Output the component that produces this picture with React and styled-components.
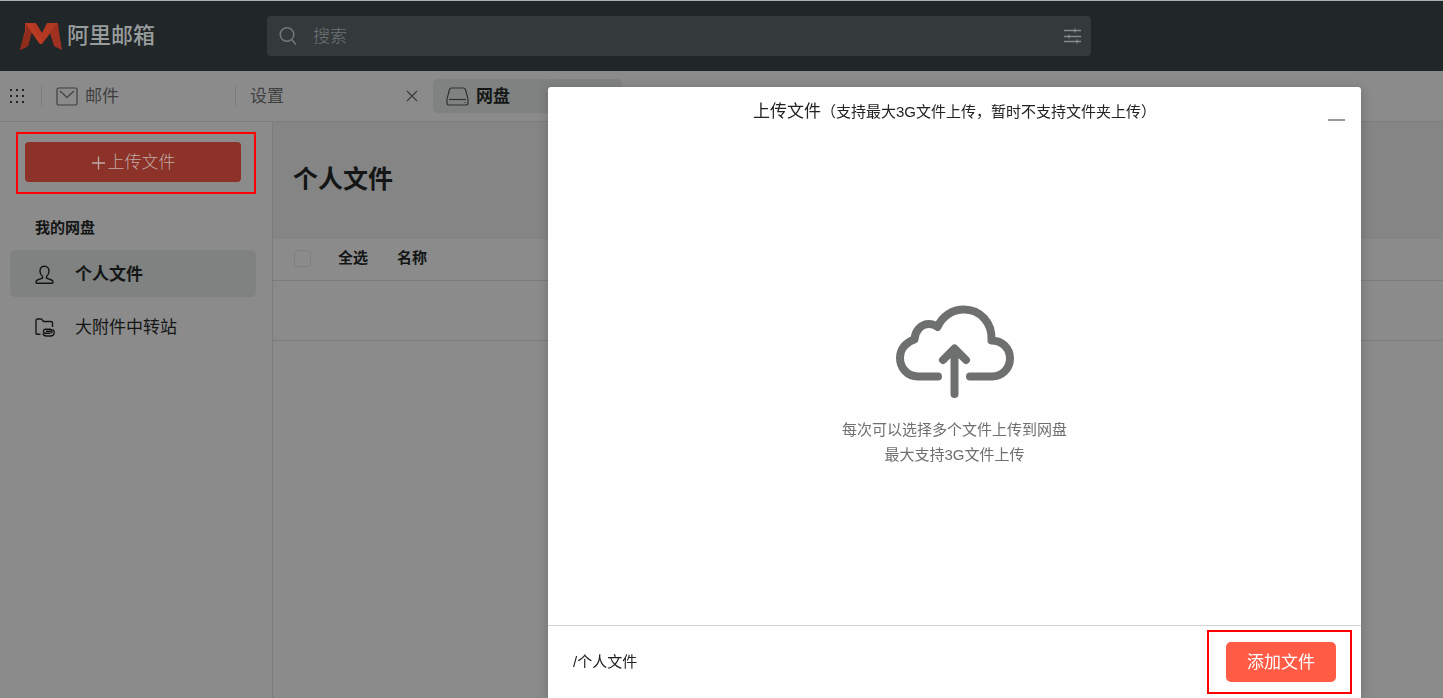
import React from 'react';
import styled, { createGlobalStyle } from 'styled-components';

const variables = {
  font: '"Liberation Sans", "Noto Sans CJK SC", sans-serif',
  fontSizes: {
    small: '15px',
    base: '17px',
    logo: '22px',
    title: '25px',
  },
  colors: {
    page: '#8b8b8b',
    header: '#212628',
    line: '#7c7c7c',
    text: '#141616',
    muted: '#3f3f3f',
    active: '#7f8281',
    primary: '#ff5b45',
    primaryDim: '#8d3228',
    mark: '#ff0000',
  },
};

const GlobalStyle = createGlobalStyle`
  * {
    box-sizing: border-box;
  }

  body {
    margin: 0;
    background: ${variables.colors.page};
    color: ${variables.colors.text};
    font-family: ${variables.font};
    font-size: ${variables.fontSizes.base};
    line-height: 24px;
  }

  button,
  input {
    font: inherit;
    color: inherit;
  }
`;

const Page = styled.div`
  display: flex;
  flex-direction: column;
  height: 100vh;
  overflow: hidden;
`;

const Header = styled.header`
  display: flex;
  align-items: center;
  height: 71px;
  flex-shrink: 0;
  border-top: 1px solid #a7b5b0;
  background: ${variables.colors.header};
`;

const Logo = styled.a`
  display: flex;
  align-items: center;
  gap: 4px;
  flex: 0 0 267px;
  padding-left: 20px;
  color: #989c9d;
  font-size: ${variables.fontSizes.logo};
  font-weight: 500;
  text-decoration: none;
`;

const SearchBox = styled.label`
  display: flex;
  align-items: center;
  gap: 15px;
  flex: 0 1 824px;
  height: 40px;
  padding: 0 9px 0 12px;
  border-radius: 4px;
  background: #34393b;
  color: #75797a;
`;

const SearchInput = styled.input`
  flex: 1;
  min-width: 0;
  padding: 2px 0 0;
  border: 0;
  outline: 0;
  background: transparent;
  font-weight: 300;

  &::placeholder {
    color: #6f7475;
    opacity: 1;
  }
`;

const IconButton = styled.button`
  display: flex;
  align-items: center;
  justify-content: center;
  padding: 0;
  border: 0;
  background: transparent;
`;

const Tabs = styled.nav`
  display: flex;
  align-items: center;
  height: 51px;
  flex-shrink: 0;
  border-bottom: 1px solid ${variables.colors.line};
`;

const AppsButton = styled(IconButton)`
  width: 41px;
  height: 34px;
  padding-right: 7px;
`;

const Tab = styled.div`
  display: flex;
  align-items: center;
  justify-content: space-between;
  width: ${({ $width }) => $width};
  height: ${({ $active }) => ($active ? '34px' : '20px')};
  padding: 0 15px 0 ${({ $active }) => ($active ? '13px' : '14px')};
  border-left: ${({ $active }) => ($active ? '0' : `1px solid ${variables.colors.line}`)};
  border-radius: ${({ $active }) => ($active ? '5px' : '0')};
  background: ${({ $active }) => ($active ? variables.colors.active : 'transparent')};
  color: ${({ $active }) => ($active ? variables.colors.text : variables.colors.muted)};
  font-weight: ${({ $active }) => ($active ? 700 : 400)};
`;

const TabLink = styled.a`
  display: flex;
  align-items: center;
  gap: 7px;
  color: inherit;
  text-decoration: none;
`;

const TabText = styled.span`
  padding-top: 2px;
`;

const Body = styled.div`
  display: flex;
  flex: 1;
  min-height: 0;
`;

const Sidebar = styled.aside`
  flex: 0 0 273px;
  padding: 10px 16px 0 10px;
  border-right: 1px solid ${variables.colors.line};
`;

const Mark = styled.div`
  display: flex;
  border: 2px solid ${variables.colors.mark};
`;

const UploadMark = styled(Mark)`
  margin-left: 6px;
  padding: 8px 13px 10px 7px;
`;

const UploadButton = styled.button`
  display: flex;
  align-items: center;
  justify-content: center;
  gap: 2px;
  width: 100%;
  height: 40px;
  padding: 2px 0 0;
  border: 0;
  border-radius: 4px;
  background: ${variables.colors.primaryDim};
  color: #c0aaa6;
  font-weight: 300;
`;

const SideTitle = styled.h2`
  margin: 22px 0 10px 25px;
  font-size: ${variables.fontSizes.small};
  font-weight: 700;
`;

const SideItem = styled.a`
  display: flex;
  align-items: center;
  gap: 20px;
  height: 47px;
  margin-bottom: 6px;
  padding: 2px 0 0 25px;
  border-radius: 5px;
  background: ${({ $active }) => ($active ? variables.colors.active : 'transparent')};
  color: ${variables.colors.text};
  font-weight: ${({ $active }) => ($active ? 700 : 400)};
  text-decoration: none;
`;

const Main = styled.main`
  flex: 1;
  min-width: 0;
`;

const MainHead = styled.div`
  height: 117px;
  padding: 39px 20px;
  background: #858585;
`;

const MainTitle = styled.h1`
  margin: 0;
  font-size: ${variables.fontSizes.title};
  font-weight: 700;
  line-height: 36px;
`;

const FileTable = styled.table`
  width: 100%;
  border-collapse: collapse;
  table-layout: fixed;
  font-size: ${variables.fontSizes.small};
`;

const HeadCell = styled.th`
  width: ${({ $width }) => $width || 'auto'};
  height: 41px;
  padding: 0 0 2px ${({ $indent }) => $indent || '0'};
  border-bottom: 1px solid ${variables.colors.line};
  font-weight: 700;
  text-align: left;
`;

const EmptyCell = styled.td`
  height: 60px;
  padding: 0;
  border-bottom: 1px solid ${variables.colors.line};
`;

const CheckBox = styled.input`
  display: block;
  appearance: none;
  width: 17px;
  height: 17px;
  margin: 0;
  border: 1px solid #7f8080;
  border-radius: 3px;
`;

const Overlay = styled.div`
  position: fixed;
  inset: 0;
  display: flex;
  justify-content: flex-end;
  padding: 87px 82px 0 0;
`;

const Dialog = styled.section`
  display: flex;
  flex-direction: column;
  width: 813px;
  border-radius: 3px 3px 0 0;
  background: #fefefe;
  box-shadow: 0 2px 12px rgba(0, 0, 0, 0.2);
`;

const DialogHead = styled.header`
  display: grid;
  grid-template-columns: 1fr auto 1fr;
  align-items: start;
  height: 50px;
  padding: 13px 16px 0;
`;

const DialogTitle = styled.h2`
  grid-column: 2;
  margin: 0;
  color: #222;
  font-size: ${variables.fontSizes.base};
  font-weight: 400;
`;

const TitleNote = styled.span`
  font-size: ${variables.fontSizes.small};
`;

const MinimizeButton = styled(IconButton)`
  justify-self: end;
  height: 40px;
  color: #777;
`;

const DropZone = styled.div`
  display: flex;
  flex-direction: column;
  align-items: center;
  flex: 1;
  padding-top: 168px;
  color: #6e706f;
`;

const Hint = styled.p`
  margin: 18px 0 0;
  font-size: ${variables.fontSizes.small};
  line-height: 25px;
  text-align: center;
`;

const DialogFoot = styled.footer`
  display: flex;
  align-items: center;
  justify-content: space-between;
  height: 73px;
  padding: 0 9px 0 25px;
  border-top: 1px solid #d2d4d3;
`;

const PathText = styled.span`
  color: #222;
  font-size: ${variables.fontSizes.small};
`;

const AddMark = styled(Mark)`
  padding: 10px 14px 10px 17px;
`;

const AddButton = styled.button`
  width: 110px;
  height: 40px;
  padding: 2px 0 0;
  border: 0;
  border-radius: 5px;
  background: ${variables.colors.primary};
  color: #fff;
`;

function LogoIcon() {
  return (
    <svg width="43" height="29" viewBox="0 0 43 29" aria-hidden="true">
      <path d="M5 1h11l6 10 5-10h11L22 22h-2L12 9 8 24 0 28 5 9Z" fill="#b23822" />
      <path d="M5 1 12 9 8 24 0 28 6 8Z" fill="#8f2c1c" />
      <path d="M5 1h6l12 19-2 2-2-1Z" fill="#bb3c25" />
      <path d="M38 1l-8 10 4 13 8 4-3-18Z" fill="#a03120" />
    </svg>
  );
}

function SearchIcon() {
  return (
    <svg width="19" height="20" viewBox="0 0 19 20" fill="none" stroke="currentColor" strokeWidth="1.5" aria-hidden="true">
      <circle cx="8" cy="8.5" r="6.8" />
      <path d="m13 14 3.500 4" strokeLinecap="round" />
    </svg>
  );
}

function FilterIcon() {
  return (
    <svg width="19" height="18" viewBox="0 0 19 18" fill="none" stroke="#85898a" strokeWidth="1.3" aria-hidden="true">
      <path d="M1 3.500h17M1 9.500h17M1 14.500h17M12 1.500v4M6 7.500v4M14 12.500v4" />
    </svg>
  );
}

function DotsIcon() {
  const steps = [3, 9, 15];
  return (
    <svg width="18" height="18" viewBox="0 0 18 18" fill="#222" aria-hidden="true">
      {steps.map((y) => steps.map((x) => (
        <rect key={`${x}-${y}`} x={x - 1} y={y - 1} width="2" height="2" />
      )))}
    </svg>
  );
}

function MailIcon() {
  return (
    <svg width="22" height="19" viewBox="0 0 22 19" fill="none" stroke="currentColor" strokeWidth="1.2" aria-hidden="true">
      <rect x="1" y="1" width="20" height="17" rx="1.500" />
      <path d="m4 4 7 6.500L18 4" />
    </svg>
  );
}

function CloseIcon() {
  return (
    <svg width="12" height="12" viewBox="0 0 12 12" fill="none" stroke="#3a3a3a" strokeWidth="1.200" aria-hidden="true">
      <path d="m1 1 10 10M11 1 1 11" />
    </svg>
  );
}

function DiskIcon() {
  return (
    <svg width="23" height="19" viewBox="0 0 23 19" fill="none" stroke="#303232" strokeWidth="1.200" aria-hidden="true">
      <path d="M5.500 1h12q1.500 0 2 1.500L22 12v4q0 2-2 2H3q-2 0-2-2v-4L3.500 2.500Q4 1 5.500 1Z" />
      <path d="M3 12.500h17" />
      <path d="M18.500 15.500h1" />
    </svg>
  );
}

function PlusIcon() {
  return (
    <svg width="15" height="16" viewBox="0 0 15 16" fill="none" stroke="currentColor" strokeWidth="1.300" aria-hidden="true">
      <path d="M1 8h13M7.500 1.500v13" />
    </svg>
  );
}

function UserIcon() {
  return (
    <svg width="20" height="20" viewBox="0 0 20 20" fill="none" stroke="currentColor" strokeWidth="1.400" strokeLinejoin="round" aria-hidden="true">
      <path d="M7.500 11.500C5.800 10 5 8 5 6.200 5 3 7 1.200 9.500 1.200S14 3 14 6.200c0 1.800-.8 3.800-2.500 5.300v1.700l5 1.800c1 .4 1.500 1.200 1.500 2.200 0 .6-.3 1-1 1H2c-.7 0-1-.4-1-1 0-1 .5-1.800 1.500-2.200l5-1.800Z" />
    </svg>
  );
}

function FolderIcon() {
  return (
    <svg width="20" height="19" viewBox="0 0 20 19" fill="none" stroke="currentColor" strokeWidth="1.400" strokeLinejoin="round" aria-hidden="true">
      <path d="M5.500 16.300H2.500Q1 16.300 1 14.800V2.500Q1 1 2.500 1h3.200q.8 0 1.300.6L8.500 3.500H16q1.500 0 1.500 1.500v4" />
      <path d="M17.500 11.500c1 .5 1.700 1.500 1.700 2.800 0 2.200-1.500 3.700-3.700 3.700h-4c-1.800 0-3.200-1-3.600-2.700" />
      <path d="M15 15.200h-5a2 2 0 0 1 0-3.900h5.500a2 2 0 0 1 0 3.900M11 13.200h5" />
    </svg>
  );
}

function CloudIcon() {
  return (
    <svg width="118" height="94" viewBox="0 0 118 94" fill="none" stroke="currentColor" strokeWidth="8" strokeLinecap="round" strokeLinejoin="round" aria-hidden="true">
      <path d="M42 71.500H22C11 71.500 4 62.500 4 53c0-9 6-16 14.500-18.500C19 26 25 19 33 19c3 0 6 1 8.500 3C46 11.500 56 4.500 68 4.500c16 0 28.500 13 27.500 31C106 35.500 114 43 114 53.500c0 10-8 18-18 18H74" />
      <path d="M58.500 89V44M47 55l11.500-11.500L70 55" />
    </svg>
  );
}

function MinusIcon() {
  return (
    <svg width="17" height="2" viewBox="0 0 17 2" aria-hidden="true">
      <path d="M0 1h17" stroke="currentColor" strokeWidth="1.500" />
    </svg>
  );
}

function TopBar() {
  return (
    <Header>
      <Logo href="#home">
        <LogoIcon />
        阿里邮箱
      </Logo>
      <SearchBox>
        <SearchIcon />
        <SearchInput type="text" placeholder="搜索" aria-label="搜索" />
        <IconButton type="button" aria-label="高级搜索">
          <FilterIcon />
        </IconButton>
      </SearchBox>
    </Header>
  );
}

function TabBar() {
  return (
    <Tabs>
      <AppsButton type="button" aria-label="应用">
        <DotsIcon />
      </AppsButton>
      <Tab $width="194px">
        <TabLink href="#mail">
          <MailIcon />
          <TabText>邮件</TabText>
        </TabLink>
      </Tab>
      <Tab $width="198px">
        <TabLink href="#settings">
          <TabText>设置</TabText>
        </TabLink>
        <IconButton type="button" aria-label="关闭">
          <CloseIcon />
        </IconButton>
      </Tab>
      <Tab $width="189px" $active>
        <TabLink href="#disk">
          <DiskIcon />
          <TabText>网盘</TabText>
        </TabLink>
      </Tab>
    </Tabs>
  );
}

function SideMenu() {
  return (
    <Sidebar>
      <UploadMark>
        <UploadButton type="button">
          <PlusIcon />
          上传文件
        </UploadButton>
      </UploadMark>
      <SideTitle>我的网盘</SideTitle>
      <SideItem href="#personal" $active>
        <UserIcon />
        个人文件
      </SideItem>
      <SideItem href="#transfer">
        <FolderIcon />
        大附件中转站
      </SideItem>
    </Sidebar>
  );
}

function FileList() {
  return (
    <Main>
      <MainHead>
        <MainTitle>个人文件</MainTitle>
      </MainHead>
      <FileTable>
        <thead>
          <tr>
            <HeadCell $width="65px" $indent="21px">
              <CheckBox type="checkbox" id="select-all" />
            </HeadCell>
            <HeadCell $width="59px">
              <label htmlFor="select-all">全选</label>
            </HeadCell>
            <HeadCell>名称</HeadCell>
          </tr>
        </thead>
        <tbody>
          <tr>
            <EmptyCell colSpan={3} />
          </tr>
        </tbody>
      </FileTable>
    </Main>
  );
}

function UploadDialog() {
  return (
    <Overlay>
      <Dialog role="dialog" aria-labelledby="upload-title">
        <DialogHead>
          <DialogTitle id="upload-title">
            上传文件
            <TitleNote>（支持最大3G文件上传，暂时不支持文件夹上传）</TitleNote>
          </DialogTitle>
          <MinimizeButton type="button" aria-label="最小化">
            <MinusIcon />
          </MinimizeButton>
        </DialogHead>
        <DropZone>
          <CloudIcon />
          <Hint>
            每次可以选择多个文件上传到网盘
            <br />
            最大支持3G文件上传
          </Hint>
        </DropZone>
        <DialogFoot>
          <PathText>/个人文件</PathText>
          <AddMark>
            <AddButton type="button">添加文件</AddButton>
          </AddMark>
        </DialogFoot>
      </Dialog>
    </Overlay>
  );
}

function App() {
  return (
    <Page>
      <GlobalStyle />
      <TopBar />
      <TabBar />
      <Body>
        <SideMenu />
        <FileList />
      </Body>
      <UploadDialog />
    </Page>
  );
}

export default App;
